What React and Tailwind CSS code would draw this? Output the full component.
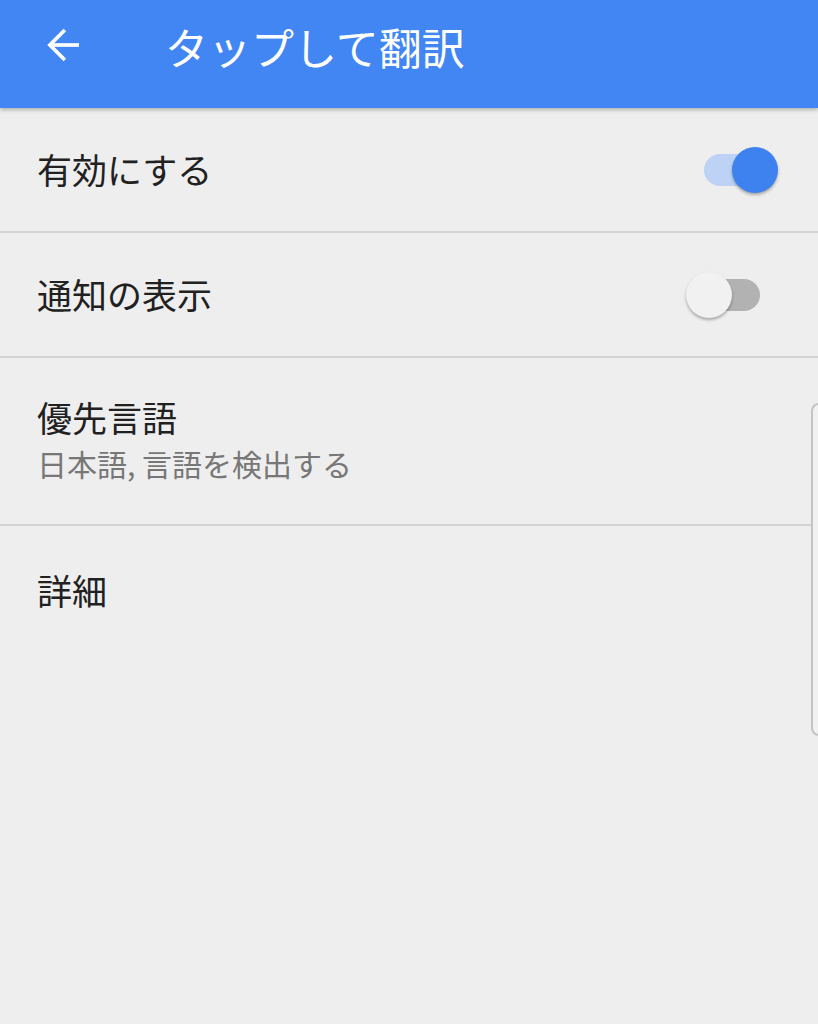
import React, { useState } from "react";

function Toggle({ on }) {
  return (
    <div className="relative w-[92px] h-[50px] flex items-center">
      {/* track */}
      <div
        className={
          on
            ? "ml-[18px] w-[56px] h-[32px] rounded-full bg-[#bdd2f4]"
            : "ml-[18px] w-[56px] h-[32px] rounded-full bg-[#b2b2b2]"
        }
      />
      {/* knob */}
      <div
        className={
          on
            ? "absolute left-[46px] top-[2px] w-[46px] h-[46px] rounded-full bg-[#3d82ee] shadow-[0_2px_3px_rgba(0,0,0,0.3)]"
            : "absolute left-0 top-[2px] w-[46px] h-[46px] rounded-full bg-[#f1f1f1] shadow-[0_2px_3px_rgba(0,0,0,0.3)]"
        }
      />
    </div>
  );
}

export default function App() {
  const [enabled] = useState(true);
  const [notify] = useState(false);

  return (
    <div
      className="relative w-[818px] h-[1024px] bg-[#eeeeee] overflow-hidden"
      style={{ fontFamily: '"Noto Sans CJK JP", "Noto Sans", sans-serif' }}
    >
      {/* app bar */}
      <div className="relative z-10 h-[108px] bg-[#4286f3] flex items-center shadow-[0_2px_4px_rgba(0,0,0,0.25)]">
        <svg
          className="ml-[44px] w-[40px] h-[40px] mb-[18px]"
          viewBox="0 0 24 24"
          fill="none"
          stroke="white"
          strokeWidth="2.2"
        >
          <path d="M21 12H3.5" />
          <path d="M12.5 3L3.5 12l9 9" />
        </svg>
        <h1 className="ml-[81px] mb-[16px] text-[43px] leading-none text-white font-normal">
          タップして翻訳
        </h1>
      </div>

      {/* settings list */}
      <div className="flex flex-col">
        <div className="h-[125px] flex items-center justify-between pl-[37px] pr-[40px] border-b-2 border-[#d3d3d3]">
          <span className="text-[35px] text-[#212121]">有効にする</span>
          <Toggle on={enabled} />
        </div>

        <div className="h-[125px] flex items-center justify-between pl-[37px] pr-[40px] border-b-2 border-[#d3d3d3]">
          <span className="text-[35px] text-[#212121]">通知の表示</span>
          <Toggle on={notify} />
        </div>

        <div className="h-[168px] flex flex-col justify-center pl-[37px] border-b-2 border-[#d3d3d3]">
          <span className="text-[35px] leading-[44px] text-[#212121]">優先言語</span>
          <span className="text-[30px] leading-[48px] text-[#777777]">
            日本語, 言語を検出する
          </span>
        </div>

        <div className="h-[128px] flex items-center pl-[37px]">
          <span className="text-[35px] text-[#212121]">詳細</span>
        </div>
      </div>

      {/* edge panel handle */}
      <div className="absolute left-[811px] top-[403px] w-[12px] h-[333px] rounded-l-[8px] border-2 border-r-0 border-[#c4c4c4] bg-[#f1f1f1]" />
    </div>
  );
}
